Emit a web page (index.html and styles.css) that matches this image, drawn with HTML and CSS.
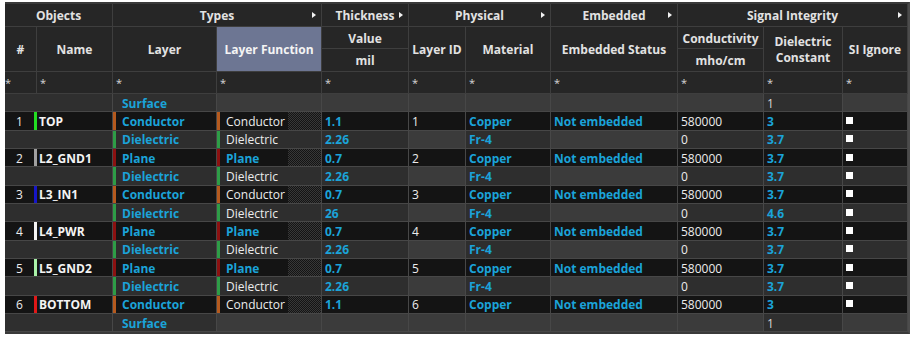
FILE: index.html
```html
<!DOCTYPE html>
<html>
<head>
<meta charset="utf-8">
<link rel="stylesheet" href="styles.css">
</head>
<body>
<div class="grid">
  <!-- group header -->
  <div class="c h g2">Objects</div>
  <div class="c h g2">Types<span class="tri"></span></div>
  <div class="c h">Thickness<span class="tri"></span></div>
  <div class="c h g2">Physical<span class="tri"></span></div>
  <div class="c h">Embedded<span class="tri"></span></div>
  <div class="c h g3">Signal Integrity<span class="tri"></span></div>

  <!-- column header -->
  <div class="c h r2">#</div>
  <div class="c h r2">Name</div>
  <div class="c h r2">Layer</div>
  <div class="c h r2 sel">Layer Function</div>
  <div class="c h">Value</div>
  <div class="c h r2">Layer ID</div>
  <div class="c h r2">Material</div>
  <div class="c h r2">Embedded Status</div>
  <div class="c h">Conductivity</div>
  <div class="c h r2 two">Dielectric<br>Constant</div>
  <div class="c h r2">SI Ignore</div>
  <div class="c h">mil</div>
  <div class="c h">mho/cm</div>

  <!-- filter row -->
  <div class="c f first">*</div>
  <div class="c f">*</div>
  <div class="c f">*</div>
  <div class="c f">*</div>
  <div class="c f">*</div>
  <div class="c f">*</div>
  <div class="c f">*</div>
  <div class="c f">*</div>
  <div class="c f">*</div>
  <div class="c f">*</div>
  <div class="c f">*</div>

  <!-- Surface -->
  <div class="c S num"></div>
  <div class="c S"></div>
  <div class="c S lay cy">Surface</div>
  <div class="c S ro"></div>
  <div class="c S ro"></div>
  <div class="c S ro"></div>
  <div class="c S ro"></div>
  <div class="c S ro"></div>
  <div class="c S ro"></div>
  <div class="c S">1</div>
  <div class="c S ro"></div>

  <!-- 1 TOP -->
  <div class="c L num n-top">1</div>
  <div class="c L name">TOP</div>
  <div class="c L lay b-c cy">Conductor</div>
  <div class="c L lf b-c">Conductor</div>
  <div class="c L cy">1.1</div>
  <div class="c L">1</div>
  <div class="c L cy">Copper</div>
  <div class="c L cy">Not embedded</div>
  <div class="c L">580000</div>
  <div class="c L cy">3</div>
  <div class="c L"><span class="cb"></span></div>

  <div class="c D num"></div>
  <div class="c D"></div>
  <div class="c D lay b-d cy">Dielectric</div>
  <div class="c D lf2 b-d">Dielectric</div>
  <div class="c D cy">2.26</div>
  <div class="c D ro"></div>
  <div class="c D cy">Fr-4</div>
  <div class="c D ro"></div>
  <div class="c D">0</div>
  <div class="c D cy">3.7</div>
  <div class="c D"><span class="cb"></span></div>

  <!-- 2 L2_GND1 -->
  <div class="c L num n-gnd1">2</div>
  <div class="c L name">L2_GND1</div>
  <div class="c L lay b-p cy">Plane</div>
  <div class="c L lf b-p cy">Plane</div>
  <div class="c L cy">0.7</div>
  <div class="c L">2</div>
  <div class="c L cy">Copper</div>
  <div class="c L cy">Not embedded</div>
  <div class="c L">580000</div>
  <div class="c L cy">3.7</div>
  <div class="c L"><span class="cb"></span></div>

  <div class="c D num"></div>
  <div class="c D"></div>
  <div class="c D lay b-d cy">Dielectric</div>
  <div class="c D lf2 b-d">Dielectric</div>
  <div class="c D cy">2.26</div>
  <div class="c D ro"></div>
  <div class="c D cy">Fr-4</div>
  <div class="c D ro"></div>
  <div class="c D">0</div>
  <div class="c D cy">3.7</div>
  <div class="c D"><span class="cb"></span></div>

  <!-- 3 L3_IN1 -->
  <div class="c L num n-in1">3</div>
  <div class="c L name">L3_IN1</div>
  <div class="c L lay b-c cy">Conductor</div>
  <div class="c L lf b-c">Conductor</div>
  <div class="c L cy">0.7</div>
  <div class="c L">3</div>
  <div class="c L cy">Copper</div>
  <div class="c L cy">Not embedded</div>
  <div class="c L">580000</div>
  <div class="c L cy">3.7</div>
  <div class="c L"><span class="cb"></span></div>

  <div class="c D num"></div>
  <div class="c D"></div>
  <div class="c D lay b-d cy">Dielectric</div>
  <div class="c D lf2 b-d">Dielectric</div>
  <div class="c D cy">26</div>
  <div class="c D ro"></div>
  <div class="c D cy">Fr-4</div>
  <div class="c D ro"></div>
  <div class="c D">0</div>
  <div class="c D cy">4.6</div>
  <div class="c D"><span class="cb"></span></div>

  <!-- 4 L4_PWR -->
  <div class="c L num n-pwr">4</div>
  <div class="c L name">L4_PWR</div>
  <div class="c L lay b-p cy">Plane</div>
  <div class="c L lf b-p cy">Plane</div>
  <div class="c L cy">0.7</div>
  <div class="c L">4</div>
  <div class="c L cy">Copper</div>
  <div class="c L cy">Not embedded</div>
  <div class="c L">580000</div>
  <div class="c L cy">3.7</div>
  <div class="c L"><span class="cb"></span></div>

  <div class="c D num"></div>
  <div class="c D"></div>
  <div class="c D lay b-d cy">Dielectric</div>
  <div class="c D lf2 b-d">Dielectric</div>
  <div class="c D cy">2.26</div>
  <div class="c D ro"></div>
  <div class="c D cy">Fr-4</div>
  <div class="c D ro"></div>
  <div class="c D">0</div>
  <div class="c D cy">3.7</div>
  <div class="c D"><span class="cb"></span></div>

  <!-- 5 L5_GND2 -->
  <div class="c L num n-gnd2">5</div>
  <div class="c L name">L5_GND2</div>
  <div class="c L lay b-p cy">Plane</div>
  <div class="c L lf b-p cy">Plane</div>
  <div class="c L cy">0.7</div>
  <div class="c L">5</div>
  <div class="c L cy">Copper</div>
  <div class="c L cy">Not embedded</div>
  <div class="c L">580000</div>
  <div class="c L cy">3.7</div>
  <div class="c L"><span class="cb"></span></div>

  <div class="c D num"></div>
  <div class="c D"></div>
  <div class="c D lay b-d cy">Dielectric</div>
  <div class="c D lf2 b-d">Dielectric</div>
  <div class="c D cy">2.26</div>
  <div class="c D ro"></div>
  <div class="c D cy">Fr-4</div>
  <div class="c D ro"></div>
  <div class="c D">0</div>
  <div class="c D cy">3.7</div>
  <div class="c D"><span class="cb"></span></div>

  <!-- 6 BOTTOM -->
  <div class="c L num n-bot">6</div>
  <div class="c L name">BOTTOM</div>
  <div class="c L lay b-c cy">Conductor</div>
  <div class="c L lf b-c">Conductor</div>
  <div class="c L cy">1.1</div>
  <div class="c L">6</div>
  <div class="c L cy">Copper</div>
  <div class="c L cy">Not embedded</div>
  <div class="c L">580000</div>
  <div class="c L cy">3</div>
  <div class="c L"><span class="cb"></span></div>

  <!-- Surface -->
  <div class="c S num"></div>
  <div class="c S"></div>
  <div class="c S lay cy">Surface</div>
  <div class="c S ro"></div>
  <div class="c S ro"></div>
  <div class="c S ro"></div>
  <div class="c S ro"></div>
  <div class="c S ro"></div>
  <div class="c S ro"></div>
  <div class="c S">1</div>
  <div class="c S ro"></div>
</div>
</body>
</html>
```

FILE: styles.css
```css
html, body {
  margin: 0;
  background: #ffffff;
}

body {
  font-family: "Open Sans", "Noto Sans", sans-serif;
  font-size: 12px;
  padding-top: 2px;
}

.grid {
  display: grid;
  width: 903px;
  margin-left: 5px;
  grid-template-columns: 32px 76px 104px 105px 87px 57px 85px 127px 86px 79px 65px;
  grid-template-rows: 23px 22px 23px 22px repeat(13, 18.35px);
  background: #262626;
  border-top: 2px solid #3a3a3a;
  border-right: 2px solid #4c4c4c;
  border-bottom: 2px solid #3a3a3a;
}

.c {
  box-sizing: border-box;
  display: flex;
  align-items: center;
  padding-left: 3px;
  padding-top: 1px;
  border-right: 1px solid #474747;
  border-bottom: 1px solid #474747;
  white-space: nowrap;
  overflow: hidden;
  color: #ececec;
  line-height: 15px;
}

/* headers */
.h {
  position: relative;
  justify-content: center;
  padding-left: 0;
  font-weight: 700;
  color: #e2e2e2;
  background: #262626;
  border-color: #3e3e3e;
}

.g2 { grid-column: span 2; }
.g3 { grid-column: span 3; }
.r2 { grid-row: span 2; }

.two {
  text-align: center;
  line-height: 16px;
}

.sel {
  background: #6d7693;
  color: #f4f4f4;
}

.tri {
  position: absolute;
  right: 5px;
  top: 8px;
  width: 0;
  height: 0;
  border-left: 4px solid #f2f2f2;
  border-top: 3.5px solid transparent;
  border-bottom: 3.5px solid transparent;
}

/* filter row */
.f {
  background: #262626;
  border-color: #3e3e3e;
  color: #d8d8d8;
  font-size: 11px;
  align-items: flex-start;
  padding-top: 3px;
}

.f.first {
  padding-left: 0;
}

/* data rows */
.L { background: #141414; }
.D { background: #2e2e2e; }
.S { background: #2f2f2f; color: #d6d6d6; }
.ro { background: #3b3b3b; }

.cy {
  color: #1ba3d9;
  font-weight: 700;
}

.num {
  justify-content: center;
  padding-left: 0;
  padding-right: 3px;
  border-right: 0;
}

.name {
  padding-left: 2px;
  font-weight: 700;
  color: #f4f4f4;
}

.lay, .lf, .lf2 {
  padding-left: 9px;
}

.lf {
  background-color: #141414;
  background-image:
    linear-gradient(to right, #141414 68%, transparent 68%),
    repeating-conic-gradient(#383838 0 25%, #141414 0 50%);
  background-size: 100% 100%, 2px 2px;
}

/* layer-type bars */
.b-c { box-shadow: inset 3px 0 0 #b55a1e; }
.b-d { box-shadow: inset 3px 0 0 #2e9d47; }
.b-p { box-shadow: inset 3px 0 0 #8c1111; }

/* layer colour bars on the # cell */
.n-top { box-shadow: inset -3px 0 0 #22dd22; }
.n-gnd1 { box-shadow: inset -3px 0 0 #a0a0a0; }
.n-in1 { box-shadow: inset -3px 0 0 #1616c8; }
.n-pwr { box-shadow: inset -3px 0 0 #f4f4f4; }
.n-gnd2 { box-shadow: inset -3px 0 0 #a9f2a9; }
.n-bot { box-shadow: inset -3px 0 0 #e01818; }

.cb {
  display: block;
  width: 7px;
  height: 7px;
  background: #ffffff;
  margin-top: -2px;
}
```
